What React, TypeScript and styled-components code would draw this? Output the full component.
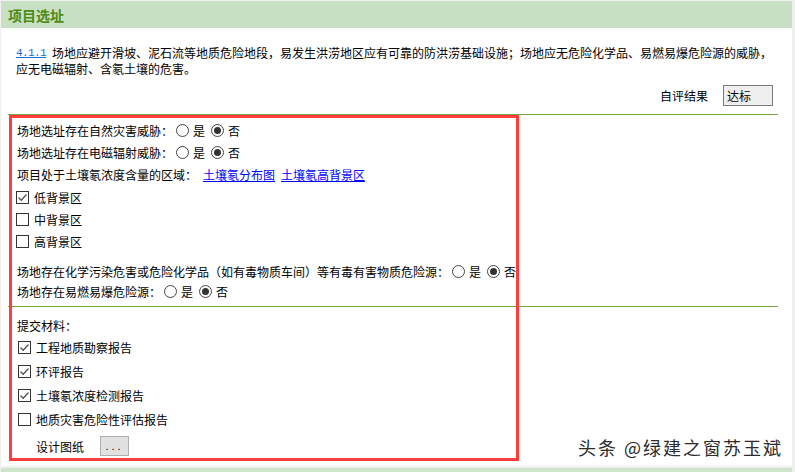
import React from "react";
import styled, { createGlobalStyle } from "styled-components";

const GlobalStyle = createGlobalStyle`
  html, body {
    margin: 0;
    padding: 0;
  }
  body {
    background: #f0f0f0;
    font-family: "Noto Sans CJK SC", "Noto Sans", sans-serif;
    font-size: 12px;
    color: #000;
  }
`;

const Page = styled.div`
  position: relative;
  width: 795px;
  height: 472px;
  overflow: hidden;
  box-sizing: border-box;
  padding: 1px 3px 0 1px;
  display: flex;
  flex-direction: column;
  gap: 2px;
`;

const Panel = styled.div`
  background: #fff;
  display: flex;
  flex-direction: column;
  flex-shrink: 0;
`;

const Header = styled.div`
  height: 27px;
  background: #c8e0c3;
  color: #4d8a16;
  font-size: 14px;
  font-weight: bold;
  padding-left: 7px;
  display: flex;
  align-items: center;
`;

const Body = styled.div`
  padding: 17px 0 10px 0;
`;

const Para = styled.div`
  margin: 0 19px 0 15px;
  white-space: nowrap;
`;

const ParaLine = styled.div`
  height: 16px;
  line-height: 16px;
  display: flex;
  align-items: center;
`;

const ClauseLink = styled.a`
  font-family: "Liberation Mono", monospace;
  font-size: 11px;
  letter-spacing: -0.6px;
  color: #1a6ddb;
  text-decoration: underline;
  margin-right: 6px;
`;

const RatingRow = styled.div`
  height: 21px;
  margin: 8px 19px 0 0;
  display: flex;
  justify-content: flex-end;
  align-items: center;
`;

const RatingLabel = styled.span`
  margin-right: 15px;
`;

const ResultBox = styled.div`
  width: 50px;
  height: 21px;
  box-sizing: border-box;
  border: 1px solid #7b7b7b;
  background: #efefef;
  padding-left: 3px;
  line-height: 19px;
`;

const Section = styled.div`
  position: relative;
`;

const Divider = styled.div<{ $mt?: number }>`
  height: 1px;
  background: #78a944;
  margin: ${(p) => p.$mt ?? 0}px 14px 0 7px;
`;

const Form = styled.div<{ $pt: number }>`
  padding: ${(p) => p.$pt}px 0 0 16px;
`;

const Row = styled.div<{ $h: number; $mt?: number; $ml?: number }>`
  height: ${(p) => p.$h}px;
  margin-top: ${(p) => p.$mt ?? 0}px;
  margin-left: ${(p) => p.$ml ?? 0}px;
  display: flex;
  align-items: center;
  white-space: nowrap;
`;

const Radio = styled.span<{ $on?: boolean; $gap: number }>`
  position: relative;
  width: 13px;
  height: 13px;
  box-sizing: border-box;
  border: 1px solid #444;
  border-radius: 50%;
  background: #fff;
  margin: 0 4px 0 ${(p) => p.$gap}px;
  &::after {
    content: "";
    display: ${(p) => (p.$on ? "block" : "none")};
    position: absolute;
    left: 2px;
    top: 2px;
    width: 7px;
    height: 7px;
    border-radius: 50%;
    background: #333;
  }
`;

const Box = styled.span`
  width: 13px;
  height: 13px;
  box-sizing: border-box;
  border: 1px solid #333;
  background: #fff;
  margin-right: 5px;
  display: flex;
  align-items: center;
  justify-content: center;
`;

const DocLink = styled.a<{ $gap: number }>`
  color: #0000ff;
  text-decoration: underline;
  margin-left: ${(p) => p.$gap}px;
`;

const PickButton = styled.button`
  width: 29px;
  height: 20px;
  margin-left: 16px;
  padding: 0;
  border: 1px solid #adadad;
  background: #e1e1e1;
  font-family: "Liberation Sans", sans-serif;
  font-size: 11px;
  letter-spacing: 3px;
  line-height: 16px;
  color: #000;
`;

const UploadLabel = styled.span`
  margin-left: 19px;
`;

const Annotation = styled.div`
  position: absolute;
  left: 8px;
  top: 0;
  width: 510px;
  height: 346px;
  box-sizing: border-box;
  border: 3px solid #ff3b3b;
  pointer-events: none;
`;

const NextHeader = styled.div`
  height: 27px;
  background: #cde5c8;
  flex-shrink: 0;
`;

const Watermark = styled.div`
  position: absolute;
  right: 12px;
  top: 436px;
  font-size: 18px;
  letter-spacing: 2px;
  line-height: 22px;
  color: #2b2b2b;
  text-shadow: 1px 1px 1px rgba(255, 255, 255, 0.9), -1px -1px 1px rgba(255, 255, 255, 0.9);
`;

const Check = ({ on }: { on?: boolean }) => (
  <Box>
    {on && (
      <svg width="11" height="11" viewBox="0 0 11 11">
        <polyline points="1.5,5.5 4.2,8.3 9.5,2.5" fill="none" stroke="#555" strokeWidth="1.3" />
      </svg>
    )}
  </Box>
);

const YesNo = ({ label, h = 22 }: { label: string; h?: number }) => (
  <Row $h={h}>
    {label}
    <Radio $gap={3} />是
    <Radio $gap={6} $on />否
  </Row>
);

const zones = [
  { name: "低背景区", on: true },
  { name: "中背景区", on: false },
  { name: "高背景区", on: false },
];

const materials = [
  { name: "工程地质勘察报告", on: true },
  { name: "环评报告", on: true },
  { name: "土壤氡浓度检测报告", on: true },
  { name: "地质灾害危险性评估报告", on: false },
];

const App = () => {
  return (
    <>
      <GlobalStyle />
      <Page>
        <Panel>
          <Header>项目选址</Header>
          <Body>
            <Para>
              <ParaLine>
                <ClauseLink href="#">4.1.1</ClauseLink>
                场地应避开滑坡、泥石流等地质危险地段，易发生洪涝地区应有可靠的防洪涝基础设施；场地应无危险化学品、易燃易爆危险源的威胁，
              </ParaLine>
              <ParaLine>应无电磁辐射、含氡土壤的危害。</ParaLine>
            </Para>
            <RatingRow>
              <RatingLabel>自评结果</RatingLabel>
              <ResultBox>达标</ResultBox>
            </RatingRow>
            <Divider $mt={8} />
            <Section>
              <Form $pt={4}>
                <YesNo label="场地选址存在自然灾害威胁：" />
                <YesNo label="场地选址存在电磁辐射威胁：" />
                <Row $h={22}>
                  项目处于土壤氡浓度含量的区域：
                  <DocLink href="#" $gap={6}>土壤氡分布图</DocLink>
                  <DocLink href="#" $gap={6}>土壤氡高背景区</DocLink>
                </Row>
                {zones.map((z, i) => (
                  <Row key={z.name} $h={22} $mt={i === 0 ? 1 : 0} $ml={-1}>
                    <Check on={z.on} />
                    {z.name}
                  </Row>
                ))}
                <Row $h={20} $mt={9}>
                  场地存在化学污染危害或危险化学品（如有毒物质车间）等有毒有害物质危险源：
                  <Radio $gap={3} />是
                  <Radio $gap={6} $on />否
                </Row>
                <YesNo label="场地存在易燃易爆危险源：" h={20} />
              </Form>
              <Divider $mt={5} />
              <Form $pt={8}>
                <Row $h={20}>提交材料：</Row>
                {materials.map((m) => (
                  <Row key={m.name} $h={24} $ml={1}>
                    <Check on={m.on} />
                    {m.name}
                  </Row>
                ))}
                <Row $h={20} $mt={5}>
                  <UploadLabel>设计图纸</UploadLabel>
                  <PickButton>...</PickButton>
                </Row>
              </Form>
              <Annotation />
            </Section>
          </Body>
        </Panel>
        <NextHeader />
        <Watermark>头条 @绿建之窗苏玉斌</Watermark>
      </Page>
    </>
  );
};

export default App;
